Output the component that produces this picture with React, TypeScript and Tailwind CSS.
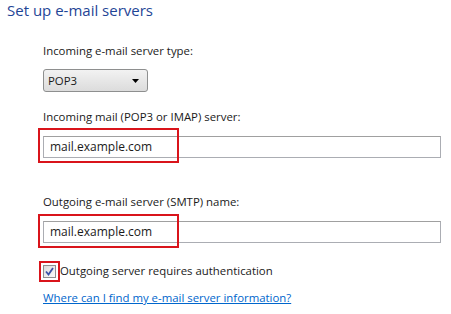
import React from 'react';

export default function App() {
  return (
    <div className="w-[451px] h-[314px] bg-white text-[11.4px] text-[#1a1a1a] font-['Open_Sans',sans-serif] overflow-hidden">
      <h1 className="pl-[7px] pt-[0px] text-[15px] leading-[20px] text-[#1f4596]">Set up e-mail servers</h1>

      <div className="pl-[43px] pr-[10px] pt-[24px]">
        <p className="leading-[14px]">Incoming e-mail server type:</p>
        <div className="mt-[11px] w-[105px] h-[23px] border border-[#8e8f8f] rounded-[3px] bg-gradient-to-b from-[#f2f2f2] to-[#dcdcdc] flex items-center justify-between pl-[4px] pr-[8px]">
          <span>POP3</span>
          <svg width="7" height="4" viewBox="0 0 7 4"><path d="M0 0h7L3.5 4z" fill="#000" /></svg>
        </div>

        <p className="mt-[18px] leading-[14px]">Incoming mail (POP3 or IMAP) server:</p>
        <div className="relative mt-[12px] h-[22px] border border-[#abadb3] border-t-[#a0a0a0] flex items-center pl-[6px]">
          <span className="text-[12px]">mail.example.com</span>
          <div className="absolute left-[-6px] top-[-9px] w-[141px] h-[35px] border-2 border-[#d9141b]" />
        </div>

        <p className="mt-[37px] leading-[14px]">Outgoing e-mail server (SMTP) name:</p>
        <div className="relative mt-[12px] h-[22px] border border-[#abadb3] border-t-[#a0a0a0] flex items-center pl-[6px]">
          <span className="text-[12px]">mail.example.com</span>
          <div className="absolute left-[-6px] top-[-8px] w-[141px] h-[34px] border-2 border-[#d9141b]" />
        </div>

        <div className="mt-[21px] flex items-center gap-[4px]">
          <div className="relative w-[13px] h-[13px] border border-[#8f8f8f] bg-gradient-to-br from-[#dcdcdc] to-[#fafafa] flex items-center justify-center">
            <svg width="9" height="9" viewBox="0 0 9 9"><path d="M1 4.5l2.5 3L8 1" stroke="#3a52a6" strokeWidth="1.8" fill="none" /></svg>
            <div className="absolute left-[-5px] top-[-5px] w-[21px] h-[21px] border-2 border-[#d9141b]" />
          </div>
          <span className="leading-[14px]">Outgoing server requires authentication</span>
        </div>

        <a href="#" className="block mt-[13px] text-[#0066cc] underline leading-[14px]">Where can I find my e-mail server information?</a>
      </div>
    </div>
  );
}
